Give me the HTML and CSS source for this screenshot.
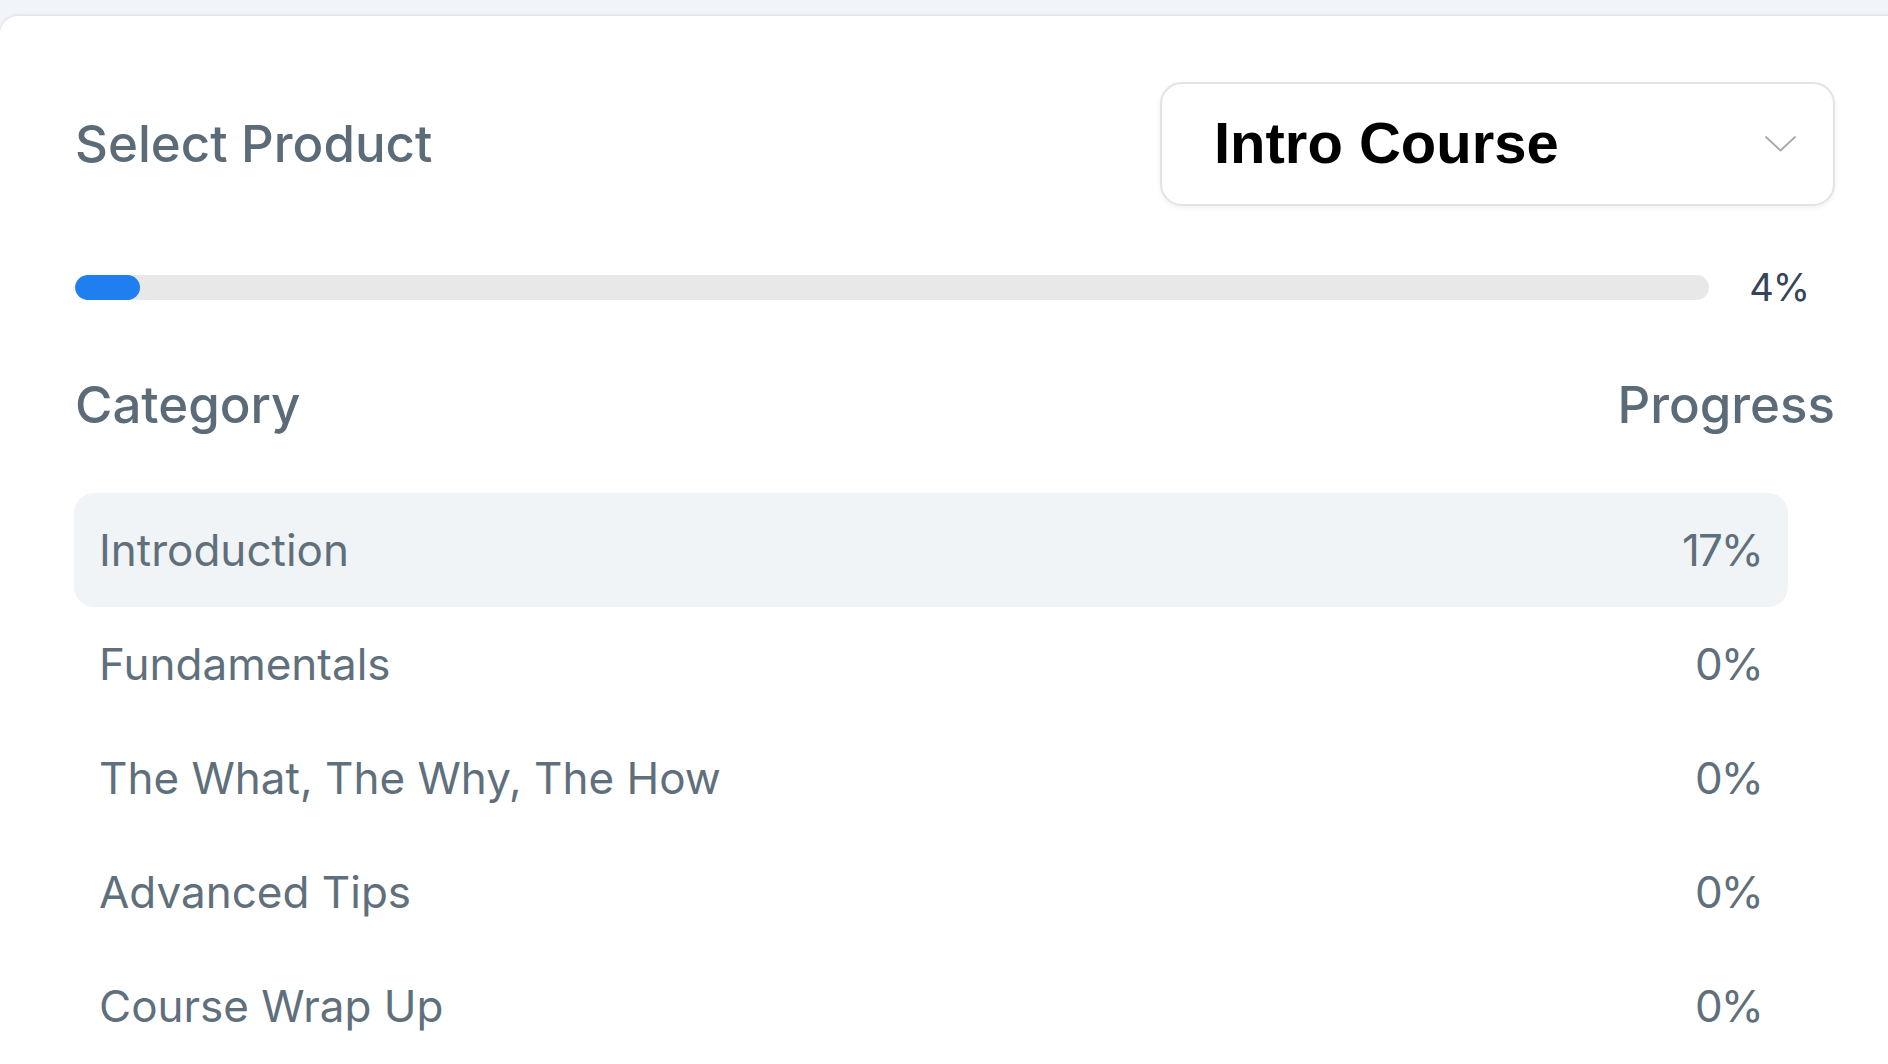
FILE: index.html
```html
<!DOCTYPE html>
<html lang="en">
<head>
<meta charset="utf-8">
<title>Progress</title>
<link rel="stylesheet" href="styles.css">
</head>
<body>
<main class="card">
  <div class="header">
    <span class="label">Select Product</span>
    <div class="select">
      <span class="select-value">Intro Course</span>
      <svg class="chevron" width="31" height="16" viewBox="0 0 31 16" aria-hidden="true">
        <path d="M1 1 L15.5 14.5 L30 1" fill="none" stroke="#a3a9b1" stroke-width="1.8" stroke-linecap="round" stroke-linejoin="round"/>
      </svg>
    </div>
  </div>

  <div class="overall">
    <div class="track"><div class="fill" style="width:4%"></div></div>
    <span class="overall-pct">4%</span>
  </div>

  <div class="table-head">
    <span class="label">Category</span>
    <span class="label">Progress</span>
  </div>

  <ul class="rows">
    <li class="row active"><span>Introduction</span><span class="pct">17%</span></li>
    <li class="row"><span>Fundamentals</span><span class="pct">0%</span></li>
    <li class="row"><span>The What, The Why, The How</span><span class="pct">0%</span></li>
    <li class="row"><span>Advanced Tips</span><span class="pct">0%</span></li>
    <li class="row"><span>Course Wrap Up</span><span class="pct">0%</span></li>
  </ul>
</main>
</body>
</html>
```

FILE: styles.css
```css
html, body {
  margin: 0;
  padding: 0;
  height: 100%;
  overflow: hidden;
}

body {
  background: #f1f5f9;
  font-family: "Inter", "Liberation Sans", sans-serif;
}

.card {
  margin-top: 16px;
  margin-right: -20px;
  min-height: 1100px;
  background: #ffffff;
  border-top-left-radius: 18px;
  box-shadow: 0 -1px 3px rgba(15, 23, 42, 0.10);
  padding: 66px 73px 0 75px;
  box-sizing: border-box;
}

.header {
  display: flex;
  align-items: center;
  justify-content: space-between;
}

.label {
  font-size: 51px;
  font-weight: 500;
  color: #5b6b78;
  line-height: 60px;
}

.select {
  width: 675px;
  height: 124px;
  box-sizing: border-box;
  border: 2px solid #e1e3e7;
  border-radius: 22px;
  box-shadow: 0 2px 5px rgba(0, 0, 0, 0.06);
  display: flex;
  align-items: center;
  justify-content: space-between;
  padding: 0 37px 4px 52px;
}

.select-value {
  font-family: "Liberation Sans", Arial, sans-serif;
  font-weight: 700;
  font-size: 58px;
  color: #000000;
}

.chevron {
  display: block;
  margin-top: 4px;
}

.overall {
  display: flex;
  align-items: center;
  gap: 40px;
  margin-top: 61px;
}

.track {
  flex: 1;
  height: 25px;
  background: #e8e8e8;
  border-radius: 13px;
  overflow: hidden;
}

.fill {
  height: 100%;
  background: #1f7ff0;
  border-radius: 13px;
}

.overall-pct {
  font-size: 38px;
  color: #354458;
  margin-right: 26px;
  line-height: 40px;
  letter-spacing: -1px;
}

.table-head {
  display: flex;
  justify-content: space-between;
  margin-top: 68px;
}

.rows {
  list-style: none;
  margin: 58px 47px 0 -1px;
  padding: 0;
}

.row {
  height: 114px;
  display: flex;
  align-items: center;
  justify-content: space-between;
  padding: 0 26px 0 25px;
  border-radius: 20px;
  font-size: 44px;
  color: #5f707c;
}

.pct {
  letter-spacing: -2px;
}

.row.active {
  background: #f1f4f7;
}
```
